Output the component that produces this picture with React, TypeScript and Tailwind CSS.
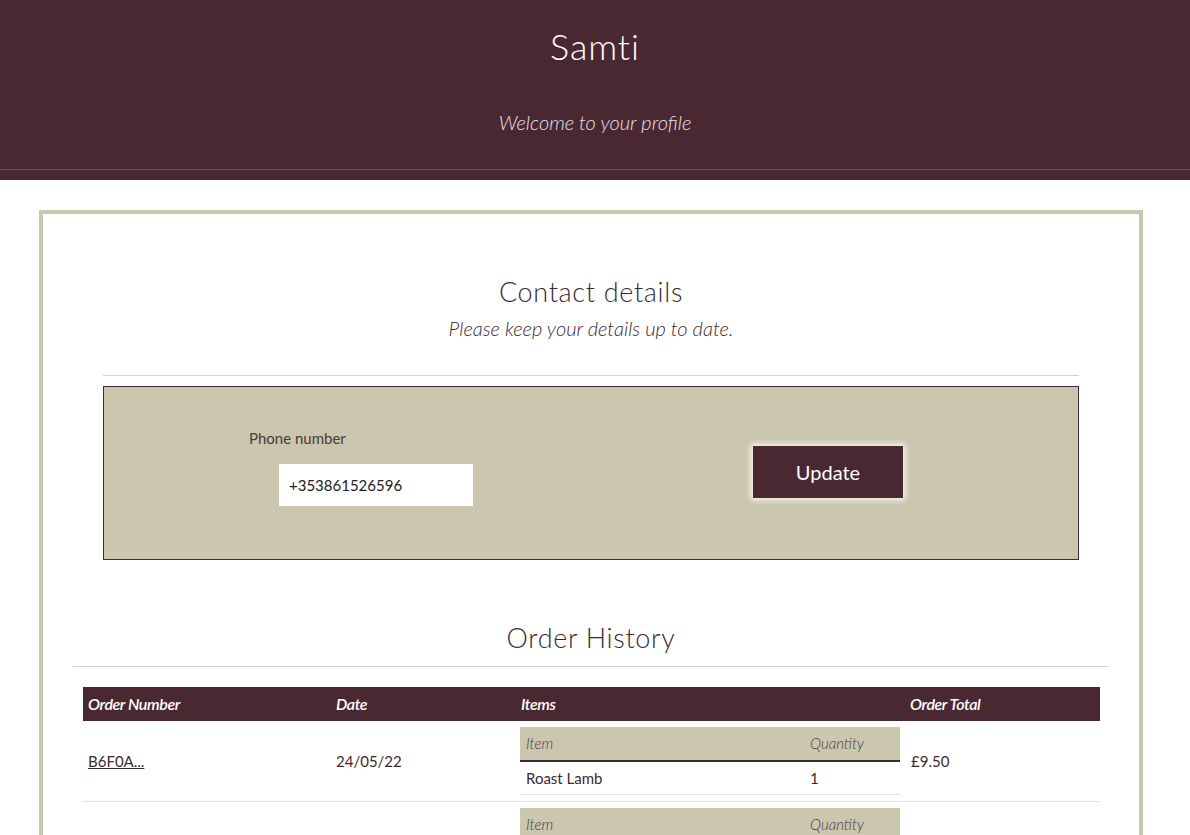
const orders = [
  { id: 'B6F0A...', date: '24/05/22', items: [{ name: 'Roast Lamb', qty: 1 }], total: '£9.50' },
  { id: '4F1C2...', date: '23/05/22', items: [{ name: 'Falafel Wrap', qty: 2 }], total: '£12.00' },
];

export default function App() {
  return (
    <div className="min-h-screen bg-white text-[#3a2a2f]" style={{ fontFamily: 'Lato, "Open Sans", sans-serif' }}>
      <header className="bg-[#4a2832] pt-[24px]">
        <h1 className="text-center text-[36px] leading-[44px] font-light text-white tracking-wide">Samti</h1>
        <p className="mt-[40px] text-center text-[20px] leading-[28px] italic font-light text-[#e6e0ee]">
          Welcome to your profile
        </p>
        <div className="mt-[33px] border-b border-[#6e5058]" />
        <div className="h-[10px]" />
      </header>

      <div className="pl-[39px] pr-[47px] pt-[30px]">
        <main className="border-4 border-b-0 border-[#cbc7ae] px-[30px] pt-[60px] pb-10">
          <section className="px-[30px]">
            <h2 className="text-center text-[27px] leading-[36px] font-light tracking-wide text-[#3a2a2f]">Contact details</h2>
            <p className="mt-[4px] text-center text-[20px] leading-[28px] italic font-light text-[#3a2a2f]">
              Please keep your details up to date.
            </p>
            <hr className="mt-[33px] border-[#d2d2d2]" />
            <form className="mt-[10px] h-[174px] bg-[#cbc6ae] border border-[#4a2832] grid grid-cols-2">
              <div className="pl-[145px] pt-[41px]">
                <label className="block text-[15px] leading-[20px] text-[#4a3a3a]">Phone number</label>
                <input
                  className="mt-[16px] ml-[30px] w-[194px] h-[42px] bg-white px-[10px] text-[15px] text-[#222] outline-none"
                  defaultValue="+353861526596"
                />
              </div>
              <div className="flex items-center pl-[162px] pb-[2px]">
                <button
                  type="button"
                  className="w-[150px] h-[52px] bg-[#4a2832] text-white text-[20px] shadow-[0_0_6px_2px_rgba(255,255,255,0.9)]"
                >
                  Update
                </button>
              </div>
            </form>
          </section>

          <section className="mt-[60px]">
            <h2 className="text-center text-[27px] leading-[36px] font-light tracking-wide text-[#3a2a2f]">Order History</h2>
            <hr className="mt-[10px] border-[#d2d2d2]" />
            <table className="mt-[20px] mx-[10px] w-[1017px] table-fixed border-collapse text-[15px]">
              <colgroup>
                <col className="w-[248px]" />
                <col className="w-[185px]" />
                <col className="w-[389px]" />
                <col className="w-[195px]" />
              </colgroup>
              <thead>
                <tr className="bg-[#4a2832] text-white italic text-[16px] h-[34px]">
                  <th className="text-left font-semibold px-[5px] tracking-tight">Order Number</th>
                  <th className="text-left font-semibold px-[5px] tracking-tight">Date</th>
                  <th className="text-left font-semibold px-[5px] tracking-tight">Items</th>
                  <th className="text-left font-semibold px-[5px] tracking-tight">Order Total</th>
                </tr>
              </thead>
              <tbody>
                {orders.map(o => (
                  <tr key={o.id} className="border-b border-[#e0e0e0]">
                    <td className="px-[5px] align-middle">
                      <a href="#" className="underline text-[#3a2a2f]">{o.id}</a>
                    </td>
                    <td className="px-[5px] align-middle">{o.date}</td>
                    <td className="px-[4px] py-[6px]">
                      <table className="w-[380px] border-collapse">
                        <thead>
                          <tr className="bg-[#cbc6ae] h-[34px] border-b-2 border-[#3a2a2f] italic font-light text-[#4a3a3a]">
                            <th className="text-left font-light px-[6px]">Item</th>
                            <th className="text-left font-light px-[6px] w-[96px]">Quantity</th>
                          </tr>
                        </thead>
                        <tbody>
                          {o.items.map(i => (
                            <tr key={i.name} className="h-[33px] border-b border-[#e0e0e0]">
                              <td className="px-[6px]">{i.name}</td>
                              <td className="px-[6px]">{i.qty}</td>
                            </tr>
                          ))}
                        </tbody>
                      </table>
                    </td>
                    <td className="px-[6px] align-middle">{o.total}</td>
                  </tr>
                ))}
              </tbody>
            </table>
          </section>
        </main>
      </div>
    </div>
  );
}
